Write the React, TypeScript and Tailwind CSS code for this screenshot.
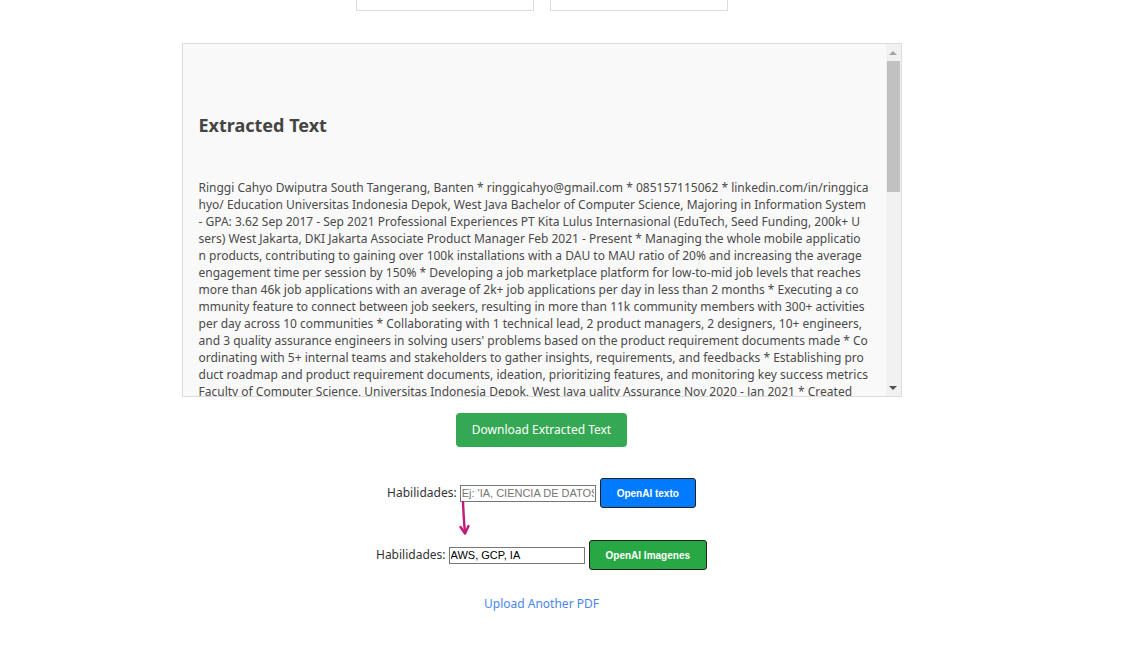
import { useState, type ReactNode } from "react";

// lines as they wrap in the viewer (break-all)
const extractedLines = [
  "Ringgi Cahyo Dwiputra South Tangerang, Banten * ringgicahyo@gmail.com * 085157115062 * linkedin.com/in/ringgica",
  "hyo/ Education Universitas Indonesia Depok, West Java Bachelor of Computer Science, Majoring in Information System",
  "- GPA: 3.62 Sep 2017 - Sep 2021 Professional Experiences PT Kita Lulus Internasional (EduTech, Seed Funding, 200k+ U",
  "sers) West Jakarta, DKI Jakarta Associate Product Manager Feb 2021 - Present * Managing the whole mobile applicatio",
  "n products, contributing to gaining over 100k installations with a DAU to MAU ratio of 20% and increasing the average",
  "engagement time per session by 150% * Developing a job marketplace platform for low-to-mid job levels that reaches",
  "more than 46k job applications with an average of 2k+ job applications per day in less than 2 months * Executing a co",
  "mmunity feature to connect between job seekers, resulting in more than 11k community members with 300+ activities",
  "per day across 10 communities * Collaborating with 1 technical lead, 2 product managers, 2 designers, 10+ engineers,",
  "and 3 quality assurance engineers in solving users' problems based on the product requirement documents made * Co",
  "ordinating with 5+ internal teams and stakeholders to gather insights, requirements, and feedbacks * Establishing pro",
  "duct roadmap and product requirement documents, ideation, prioritizing features, and monitoring key success metrics",
  "Faculty of Computer Science, Universitas Indonesia Depok, West Java uality Assurance Nov 2020 - Jan 2021 * Created",
  "test scenarios and test cases for the web platform",
];

const ui = { fontFamily: '"Noto Sans", "Open Sans", sans-serif' };
const arial = { fontFamily: '"Liberation Sans", Arial, sans-serif' };

function FakeScrollbar() {
  return (
    <div className="flex w-[15px] shrink-0 flex-col items-center bg-[#f1f1f1]">
      <div className="flex h-[17px] w-full items-center justify-center">
        <div className="h-0 w-0 border-x-[4px] border-b-[4px] border-x-transparent border-b-[#a3a3a3]" />
      </div>
      <div className="h-[131px] w-[13px] bg-[#c1c1c1]" />
      <div className="flex-1" />
      <div className="flex h-[17px] w-full items-center justify-center">
        <div className="h-0 w-0 border-x-[4px] border-t-[4px] border-x-transparent border-t-[#505050]" />
      </div>
    </div>
  );
}

function SkillRow({
  value,
  placeholder,
  label,
  color,
  children,
}: {
  value: string;
  placeholder?: string;
  label: string;
  color: string;
  children?: ReactNode;
}) {
  const [text, setText] = useState(value);
  return (
    <div className="flex items-center">
      <span className="text-[12px] text-[#333]" style={ui}>
        Habilidades:
      </span>
      <span className="relative ml-[3px] flex">
        <input
          className="h-[17px] w-[136px] border border-[#767676] bg-white px-[1px] text-[11px] text-black outline-none placeholder:text-[#757575]"
          onChange={(e) => setText(e.target.value)}
          placeholder={placeholder}
          style={arial}
          value={text}
        />
        {children}
      </span>
      <button
        className={`ml-[4px] h-[30px] rounded-[3px] border border-[#222] px-[16px] text-[10px] font-bold text-white ${color}`}
        style={arial}
        type="button"
      >
        {label}
      </button>
    </div>
  );
}

export default function App() {
  return (
    <div className="min-h-[645px] w-[1136px] bg-white">
      <div className="flex w-[1083px] flex-col items-center">
        <div className="flex gap-[16px]">
          <div className="h-[11px] w-[178px] border border-t-0 border-[#dcdcdc]" />
          <div className="h-[11px] w-[178px] border border-t-0 border-[#dcdcdc]" />
        </div>

        <div className="mt-[32px] flex h-[354px] w-[720px] border border-[#dcdcdc] bg-[#f9f9f9]">
          <div className="flex-1 overflow-hidden px-[16px] pt-[69px] text-[#444]" style={ui}>
            <h2 className="text-[18px] font-bold leading-[24px]">Extracted Text</h2>
            <p className="mt-[42px] text-[12px] leading-[17px] text-[#4a4a4a]">
              {extractedLines.map((line) => (
                <span className="block whitespace-nowrap" key={line}>
                  {line}
                </span>
              ))}
            </p>
          </div>
          <FakeScrollbar />
        </div>

        <button
          className="mt-[16px] h-[34px] w-[171px] rounded-[4px] bg-[#34a853] text-[12px] text-white"
          style={ui}
          type="button"
        >
          Download Extracted Text
        </button>

        <div className="mt-[31px] flex flex-col items-center gap-[32px]">
          <SkillRow
            color="bg-[#007bff]"
            label="OpenAI texto"
            placeholder="Ej: 'IA, CIENCIA DE DATOS'"
            value=""
          >
            {/* hand-drawn arrow pointing to the row below */}
            <svg
              className="pointer-events-none absolute left-[-2px] top-[16px]"
              fill="none"
              height="36"
              viewBox="0 0 14 36"
              width="14"
            >
              <path
                d="M5 1 C5.5 12 6 22 7 32"
                stroke="#bf1b7b"
                strokeLinecap="round"
                strokeWidth="2.4"
              />
              <path
                d="M2.5 26 L7 32.5 L10.5 25"
                stroke="#bf1b7b"
                strokeLinecap="round"
                strokeLinejoin="round"
                strokeWidth="2.4"
              />
            </svg>
          </SkillRow>
          <SkillRow color="bg-[#28a745]" label="OpenAI Imagenes" value="AWS, GCP, IA" />
        </div>

        <a className="mt-[25px] text-[12px] text-[#4a86e8]" href="#" style={ui}>
          Upload Another PDF
        </a>
      </div>
    </div>
  );
}
